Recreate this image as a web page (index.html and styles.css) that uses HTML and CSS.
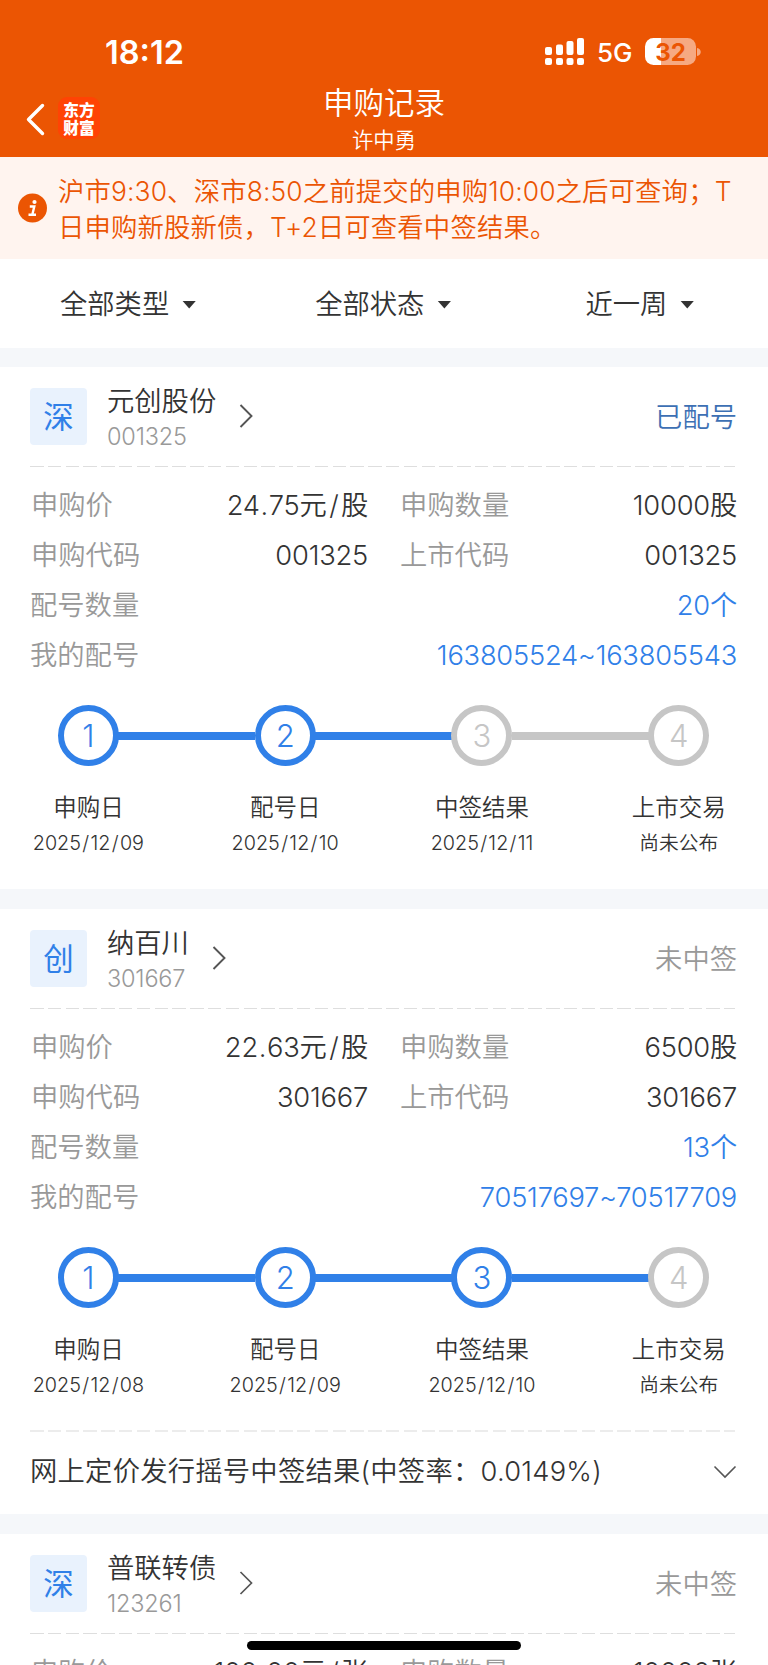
FILE: index.html
```html
<!DOCTYPE html>
<html lang="zh-CN">
<head>
<meta charset="utf-8">
<title>申购记录</title>
<link rel="stylesheet" href="styles.css">
</head>
<body>
<div class="screen">
  <header class="header">
    <div class="status">
      <span class="clock">18:12</span>
      <div class="status-right">
        <svg class="signal" width="40" height="28" viewBox="0 0 40 28" fill="#fff"><rect x="0" y="9" width="7" height="8" rx="2"/><rect x="11" y="6.500" width="7" height="10.500" rx="2"/><rect x="21.500" y="3" width="7" height="14" rx="2"/><rect x="32" y="0" width="7" height="17" rx="2"/><rect x="0" y="20" width="7" height="7" rx="2"/><rect x="11" y="20" width="7" height="7" rx="2"/><rect x="21.500" y="20" width="7" height="7" rx="2"/><rect x="32" y="20" width="7" height="7" rx="2"/></svg>
        <span class="network">5G</span>
        <div class="battery"><span class="battery-num">32</span></div>
        <svg class="battery-cap" width="4" height="8" viewBox="0 0 4 8"><path d="M0 0C5 1 5 7 0 8Z" fill="#f6a982"/></svg>
      </div>
    </div>
    <div class="nav">
      <div class="nav-left">
        <svg class="back" width="20" height="34" viewBox="0 0 20 34"><path d="M17.500 3.500L3.500 17.500L17.500 31.500" fill="none" stroke="#fff" stroke-width="3.400" stroke-linecap="round" stroke-linejoin="round"/></svg>
        <div class="logo"><span>东方</span><span>财富</span></div>
      </div>
      <div class="nav-title"><h1>申购记录</h1><p>许中勇</p></div>
      <div></div>
    </div>
  </header>

  <div class="notice">
    <svg width="30" height="30" viewBox="0 0 30 30"><circle cx="14.500" cy="15" r="14.500" fill="#eb5503"/><circle cx="16.500" cy="9" r="2.100" fill="#fff"/><path d="M11.800 13.500H16.300L14.300 21.800M10.500 21.800H18" fill="none" stroke="#fff" stroke-width="2.400"/></svg>
    <p>沪市9:30、深市8:50之前提交的申购10:00之后可查询；T<br>日申购新股新债，T+2日可查看中签结果。</p>
  </div>

  <div class="filters">
    <div class="filter f1">全部类型<i class="caret"></i></div>
    <div class="filter f2">全部状态<i class="caret"></i></div>
    <div class="filter f3">近一周<i class="caret"></i></div>
  </div>

  <section class="card">
    <div class="head">
      <div class="badge">深</div>
      <div class="stock"><b>元创股份</b><small>001325</small></div>
      <svg class="go" width="16" height="26" viewBox="0 0 16 26"><path d="M2.500 2L13.500 13L2.500 24" fill="none" stroke="#555" stroke-width="1.900"/></svg>
      <div class="state allotted">已配号</div>
    </div>
    <div class="dash"></div>
    <div class="rows">
      <div class="row"><span class="k inset">申购价</span><span class="v">24<i class="point">.</i>75元<i class="slash">/</i>股</span><span class="k k2">申购数量</span><span class="v">10000股</span></div>
      <div class="row"><span class="k inset">申购代码</span><span class="v">001325</span><span class="k k2">上市代码</span><span class="v">001325</span></div>
      <div class="row wide"><span class="k">配号数量</span><span class="v blue">20个</span></div>
      <div class="row wide"><span class="k">我的配号</span><span class="v blue">163805524~163805543</span></div>
    </div>
    <div class="steps">
      <div class="step on"><div class="dot">1</div><b>申购日</b><small>2025<i>/</i>12<i>/</i>09</small></div>
      <div class="step on"><div class="dot">2</div><b>配号日</b><small>2025<i>/</i>12<i>/</i>10</small></div>
      <div class="step"><div class="dot">3</div><b>中签结果</b><small>2025<i>/</i>12<i>/</i>11</small></div>
      <div class="step"><div class="dot">4</div><b>上市交易</b><small>尚未公布</small></div>
    </div>
  </section>

  <section class="card second">
    <div class="head">
      <div class="badge">创</div>
      <div class="stock"><b>纳百川</b><small>301667</small></div>
      <svg class="go" width="16" height="26" viewBox="0 0 16 26"><path d="M2.500 2L13.500 13L2.500 24" fill="none" stroke="#555" stroke-width="1.900"/></svg>
      <div class="state">未中签</div>
    </div>
    <div class="dash"></div>
    <div class="rows">
      <div class="row"><span class="k inset">申购价</span><span class="v">22<i class="point">.</i>63元<i class="slash">/</i>股</span><span class="k k2">申购数量</span><span class="v">6500股</span></div>
      <div class="row"><span class="k inset">申购代码</span><span class="v">301667</span><span class="k k2">上市代码</span><span class="v">301667</span></div>
      <div class="row wide"><span class="k">配号数量</span><span class="v blue">13个</span></div>
      <div class="row wide"><span class="k">我的配号</span><span class="v blue">70517697~70517709</span></div>
    </div>
    <div class="steps">
      <div class="step on"><div class="dot">1</div><b>申购日</b><small>2025<i>/</i>12<i>/</i>08</small></div>
      <div class="step on"><div class="dot">2</div><b>配号日</b><small>2025<i>/</i>12<i>/</i>09</small></div>
      <div class="step on"><div class="dot">3</div><b>中签结果</b><small>2025<i>/</i>12<i>/</i>10</small></div>
      <div class="step"><div class="dot">4</div><b>上市交易</b><small>尚未公布</small></div>
    </div>
    <div class="dash thick"></div>
    <div class="result"><span>网上定价发行摇号中签结果(中签率：0.0149%)</span><svg width="24" height="14" viewBox="0 0 24 14"><path d="M1.500 1.500L12 12L22.500 1.500" fill="none" stroke="#555" stroke-width="1.600"/></svg></div>
  </section>

  <section class="card third">
    <div class="head">
      <div class="badge">深</div>
      <div class="stock"><b>普联转债</b><small>123261</small></div>
      <svg class="go" width="16" height="26" viewBox="0 0 16 26"><path d="M2.500 2L13.500 13L2.500 24" fill="none" stroke="#555" stroke-width="1.700"/></svg>
      <div class="state">未中签</div>
    </div>
    <div class="dash"></div>
    <div class="rows">
      <div class="row"><span class="k inset">申购价</span><span class="v">100<i class="point">.</i>00元<i class="slash">/</i>张</span><span class="k k2">申购数量</span><span class="v">10000张</span></div>
    </div>
  </section>
  <div class="home-bar"></div>
</div>
</body>
</html>
```
FILE: styles.css
```css
* { box-sizing: border-box; }
body { margin: 0; background: #fff; }
h1, p, b, small { margin: 0; font-weight: inherit; }
i { font-style: normal; }
svg { display: block; flex: none; }
.screen {
  position: relative; width: 768px; height: 1665px; overflow: hidden;
  background: #f5f7fa; color: #333;
  font-family: Inter, "Noto Sans CJK SC", sans-serif;
  font-size: 27.300px; font-weight: 350; line-height: 40px; white-space: nowrap;
}
.header { height: 157px; background: #eb5503; color: #fff; padding-top: 32px; }
.status { display: flex; justify-content: space-between; height: 40px; padding: 0 67px 0 105px; }
.clock { font-size: 32.500px; font-weight: 600; padding-top: 1px; }
.status-right { display: flex; align-items: center; }
.signal { margin-top: 0; }
.network { font-size: 26px; font-weight: 450; margin-left: 12px; padding-top: 2px; width: 48px; letter-spacing: -0.100px; }
.battery { width: 51px; height: 27px; border-radius: 8.500px; background: linear-gradient(90deg, #fff 16px, #f6a982 16px); text-align: center; line-height: 27px; margin-top: -1px; }
.battery-num { font-size: 24px; font-weight: 700; color: #eb5503; }
.battery-cap { margin-left: 1px; }
.nav { display: grid; grid-template-columns: 1fr auto 1fr; height: 85px; }
.nav-left { display: flex; padding: 25px 0 0 25px; }
.back { margin-top: 5px; }
.logo { margin-left: 13px; width: 42px; height: 42px; border-radius: 9px; background: #ff4304; display: flex; flex-direction: column; align-items: center; padding-top: 4px; font: 800 15.700px/18px "Noto Sans CJK SC", sans-serif; }
.nav-title { text-align: center; }
.nav-title h1 { font-size: 30.500px; line-height: 40px; padding-top: 11px; }
.nav-title p { font-size: 21.300px; line-height: 30px; margin-top: 2px; }
.notice { height: 102px; background: #fff4ef; color: #eb5503; display: flex; padding: 16px 0 0 18px; line-height: 36px; font-size: 26.400px; letter-spacing: 0.120px; }
.notice svg { margin-top: 20px; }
.notice p { margin-left: 10px; }
.filters { height: 89px; background: #fff; display: flex; padding-top: 26px; }
.filter { display: flex; align-items: center; height: 40px; }
.f1 { margin-left: 60px; }
.f2 { margin-left: 119px; }
.f3 { margin-left: 134px; }
.caret { width: 14px; height: 8px; background: #333; clip-path: polygon(0 0, 100% 0, 50% 100%); margin: -1px 0 0 13px; }
.card { background: #fff; margin-top: 19px; height: 522px; padding: 21px 31px 0 30px; }
.card.second { margin-top: 20px; height: 605px; }
.card.third { margin-top: 20px; height: 140px; }
.head { display: flex; height: 57px; }
.badge { width: 57px; height: 57px; border-radius: 4px; background: #e9f2fd; color: #3080e8; text-align: center; font-size: 30.500px; line-height: 57px; font-weight: 400; }
.stock { display: flex; flex-direction: column; margin-left: 20px; }
.stock b { line-height: 36px; margin-top: -4px; }
.stock small { font-size: 23.500px; line-height: 36px; margin-top: -1px; color: #999; letter-spacing: -0.200px; }
.go { margin: 15px 0 0 22px; }
.state { margin-left: auto; color: #999; line-height: 59px; }
.allotted { color: #3d70b4; }
.dash { height: 1px; width: 705px; margin-top: 21px; background: repeating-linear-gradient(90deg, #dedede 0 13.500px, transparent 13.500px 17.800px); }
.dash.thick { height: 2px; margin-top: 0; background: repeating-linear-gradient(90deg, #ececec 0 13.500px, transparent 13.500px 17.800px); }
.rows { padding-top: 14px; }
.row { display: grid; grid-template-columns: 110px 228px 140px 229px; height: 50px; line-height: 50px; }
.row.wide { grid-template-columns: 110px 597px; }
.k { color: #999; }
.inset { padding-left: 1px; }
.k2 { padding-left: 32px; }
.v { text-align: right; letter-spacing: -0.220px; }
.slash { margin: 0 2.500px; }
.point { margin: 0 0.800px; }
.blue { color: #3080e8; }
.steps { display: grid; grid-template-columns: repeat(4, 196.800px); margin: 24px 0 0 -40px; height: 202px; }
.step { display: flex; flex-direction: column; align-items: center; position: relative; }
.dot { width: 61px; height: 61px; border: 6px solid #c6c6c6; border-radius: 50%; color: #c6c6c6; font-size: 31px; line-height: 49px; text-align: center; }
.on .dot { border-color: #3080e8; color: #3080e8; }
.step:not(:last-child)::after { content: ""; position: absolute; left: 128px; top: 27px; width: 137px; height: 8px; background: #c6c6c6; }
.step.on:not(:last-child)::after { background: #3080e8; }
.step b { font-size: 23.500px; line-height: 36px; margin-top: 24px; }
.step small { font-size: 19.800px; line-height: 36px; margin-top: -1px; }
.step small i { margin: 0 1.300px; }
.second .steps { height: 183px; }
.result { display: flex; align-items: center; justify-content: space-between; height: 79px; letter-spacing: 0.250px; }
.home-bar { position: absolute; left: 247px; top: 1641px; width: 274px; height: 9px; border-radius: 5px; background: #000; }
```
